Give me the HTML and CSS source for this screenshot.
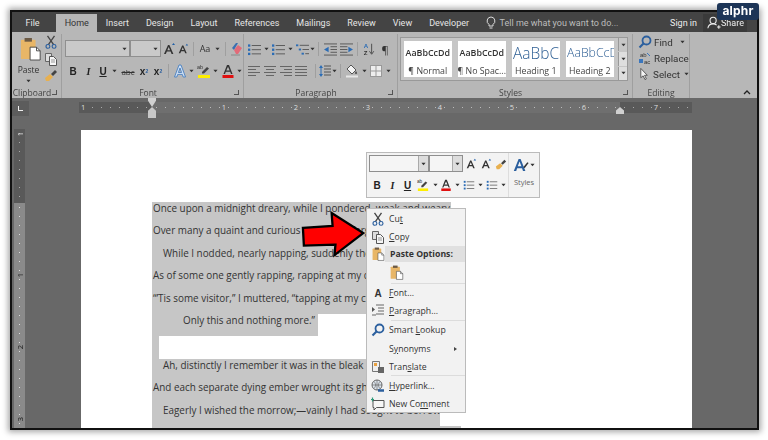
FILE: index.html
```html
<!DOCTYPE html>
<html lang="en">
<head>
<meta charset="utf-8">
<title>Word</title>
<link rel="stylesheet" href="styles.css">
</head>
<body>
<svg class="defs" aria-hidden="true">
  <symbol id="caret" viewBox="0 0 6 4"><path d="M0.5 0.5h5L3 3.5z" fill="#333"/></symbol>
  <symbol id="grow" viewBox="0 0 14 14"><path d="M2 12L6 3h1.400l4 9h-1.800l-1-2.400H4.900L3.800 12zM5.400 8.200h2.700L6.700 5z" fill="#333"/><path d="M10 3l1.500-2L13 3z" fill="#1f5fa8"/></symbol>
  <symbol id="eraser" viewBox="0 0 14 14"><path d="M3 6L7 1h2L5 8z" fill="#3a6fb0"/><path d="M5 8l4-5 4 3-4 6H7z" fill="#e26a78"/><path d="M2 13h9" stroke="#888"/></symbol>
  <symbol id="bullets" viewBox="0 0 16 14"><g fill="#2b6cb5"><rect x="1" y="1.500" width="2.500" height="2.500"/><rect x="1" y="6" width="2.500" height="2.500"/><rect x="1" y="10.500" width="2.500" height="2.500"/></g><path d="M5 2.700h10M5 7.200h10M5 11.700h10" stroke="#555"/></symbol>
  <symbol id="multi" viewBox="0 0 16 14"><g fill="#2b6cb5"><rect x="1" y="1.500" width="2.500" height="2"/><rect x="4" y="6" width="2.500" height="2"/><rect x="7" y="10.500" width="2.500" height="2"/></g><path d="M5 2.500h10M8 7h7M11 11.500h4" stroke="#555"/></symbol>
  <symbol id="indL" viewBox="0 0 16 14"><path d="M1 1h14M8 4h7M8 7h7M8 10h7M1 13h14" stroke="#555"/><path d="M6 4v6L1 7z" fill="#2b6cb5"/></symbol>
  <symbol id="indR" viewBox="0 0 16 14"><path d="M1 1h14M1 4h8M1 7h8M1 10h8M1 13h14" stroke="#555"/><path d="M10 4v6l5-3z" fill="#2b6cb5"/></symbol>
  <symbol id="sort" viewBox="0 0 14 16"><path d="M10 2v11M7.500 10.500L10 14l2.500-3.500" stroke="#444" fill="none"/><text x="1" y="7" font-size="7" font-weight="700" font-family="Liberation Sans" fill="#2b6cb5">A</text><text x="1" y="15" font-size="7" font-weight="700" font-family="Liberation Sans" fill="#333">Z</text></symbol>
  <symbol id="alignL" viewBox="0 0 14 12"><path d="M1 1.500h12M1 4.500h8M1 7.500h12M1 10.500h8" stroke="#666"/></symbol>
  <symbol id="alignC" viewBox="0 0 14 12"><path d="M1 1.500h12M3 4.500h8M1 7.500h12M3 10.500h8" stroke="#666"/></symbol>
  <symbol id="alignR" viewBox="0 0 14 12"><path d="M1 1.500h12M5 4.500h8M1 7.500h12M5 10.500h8" stroke="#666"/></symbol>
  <symbol id="alignJ" viewBox="0 0 14 12"><path d="M1 1.500h12M1 4.500h12M1 7.500h12M1 10.500h12" stroke="#666"/></symbol>
  <symbol id="spacing" viewBox="0 0 14 14"><path d="M6 2h7M6 5h7M6 8h7M6 11h7" stroke="#555"/><path d="M3 1l2 3H1zM3 13l2-3H1z" fill="#2b6cb5"/><path d="M3 4v6" stroke="#2b6cb5"/></symbol>
  <symbol id="shade" viewBox="0 0 14 14"><path d="M6 1l5 5-4 4-5-5z" fill="#f4f4f4" stroke="#555"/><path d="M11 7c1.500 2 1.500 3 0 3s-1.500-1 0-3z" fill="#555"/><rect x="1" y="11.500" width="12" height="2" fill="#e8e8e8"/></symbol>
  <symbol id="borders" viewBox="0 0 12 12"><rect x="0.500" y="0.500" width="11" height="11" fill="#eee" stroke="#999"/><path d="M6 0v12M0 6h12" stroke="#999"/></symbol>
  <symbol id="scissors" viewBox="0 0 14 16"><path d="M3 1l7 10M11 1L4 11" stroke="#444" stroke-width="1.500"/><circle cx="3.500" cy="13" r="2.200" fill="none" stroke="#2b5f9e" stroke-width="1.300"/><circle cx="10.500" cy="13" r="2.200" fill="none" stroke="#2b5f9e" stroke-width="1.300"/></symbol>
  <symbol id="copy" viewBox="0 0 14 14"><path d="M1.500 1.500h6v8h-6z" fill="#ddd" stroke="#666"/><path d="M5.500 4.500h4l3 3v6h-7z" fill="#f6f6f6" stroke="#555"/><path d="M7 8h4M7 10h4" stroke="#999"/></symbol>
  <symbol id="brush" viewBox="0 0 14 14"><path d="M1 10l5-4 3 3-4 4H2z" fill="#e8b04f"/><path d="M7 6l4-4 2 2-4 4z" fill="#444"/></symbol>
  <symbol id="paste" viewBox="0 0 24 26"><rect x="1" y="3" width="16" height="21" rx="1" fill="#e8b667"/><rect x="5" y="1" width="8" height="4" fill="#6c5a45"/><path d="M11 11h7l4 4v10H11z" fill="#fff" stroke="#444"/><path d="M18 11v4h4" fill="none" stroke="#444"/></symbol>
  <symbol id="hilite" viewBox="0 0 14 14"><text x="0" y="5" font-size="5.500" font-family="Liberation Sans" fill="#333">ab</text><path d="M5 8l5-5 2 1.500-5 5H5z" fill="#444"/><rect x="1" y="11" width="12" height="3" fill="#ffef00"/></symbol>
  <symbol id="fontcolor" viewBox="0 0 14 14"><path d="M2.500 10L6 1h2l3.500 9H10L9.200 7.800H4.800L4 10zM5.300 6.400h3.400L7 2.800z" fill="#333"/><rect x="1.500" y="11" width="11" height="3" fill="#e01010"/></symbol>
  <symbol id="effect" viewBox="0 0 14 14"><path d="M1.500 13L6 1h2l4.500 12h-2.300L9.300 10.400H4.700L3.800 13zM5.400 8.500h3.200L7 4z" fill="#cfe0f4" stroke="#3a76bd" stroke-width=".8"/></symbol>
  <symbol id="styleA" viewBox="0 0 20 18"><path d="M1 16L7 1h2.500l6 15h-3l-1.200-3.500H5.200L4 16zM6 10h4.500L8.200 4z" fill="#2b5f9e"/><path d="M13 11l5-6 1.500 1-5 6.500z" fill="#333"/></symbol>
  <symbol id="glass" viewBox="0 0 14 14"><circle cx="8.500" cy="5.500" r="4" fill="none" stroke="#2b5f9e" stroke-width="1.800"/><path d="M5.500 8.500L1.500 12.500" stroke="#2b5f9e" stroke-width="2.200"/></symbol>
  <symbol id="replace" viewBox="0 0 14 14"><text x="2" y="5.500" font-size="6" font-family="Liberation Sans" fill="#333">ab</text><text x="6" y="13" font-size="6" font-family="Liberation Sans" fill="#333">ac</text><path d="M1 8h4v4H1z" fill="#3a76bd"/><path d="M9 2l3 3" stroke="#3a76bd"/></symbol>
  <symbol id="cursor" viewBox="0 0 14 14"><path d="M3 1v10l2.500-2 2 4 1.500-.8-2-3.800H10z" fill="#f4f4f4" stroke="#555"/></symbol>
  <symbol id="para" viewBox="0 0 14 14"><path d="M5 1h8M7 4h6M7 7h6M5 10h8" stroke="#666"/><path d="M1 3l3 2.500L1 8z" fill="#555"/><path d="M1 11h4" stroke="#666"/></symbol>
  <symbol id="translate" viewBox="0 0 14 14"><path d="M1.500 1.500h7v10h-7z" fill="#eee" stroke="#777"/><rect x="3" y="3" width="3" height="3" fill="#e8a040"/><path d="M7 7h6v6H7z" fill="#666"/></symbol>
  <symbol id="globe" viewBox="0 0 14 14"><circle cx="6" cy="6" r="5" fill="#dfe7ef" stroke="#666"/><path d="M1 6h10M6 1v10M3 2.500c2 2 2 5 0 7M9 2.500c-2 2-2 5 0 7" stroke="#666" fill="none" stroke-width=".7"/><path d="M7 11.500h6" stroke="#2b5f9e" stroke-width="2.500"/></symbol>
  <symbol id="comment" viewBox="0 0 14 14"><path d="M2 3.500h11v7H5.500L3 13v-2.500H2z" fill="#f6f6f6" stroke="#555"/><path d="M1.500 0.500v4M0 2.500h3" stroke="#2f9a7a" stroke-width="1.200"/></symbol>
  <symbol id="person" viewBox="0 0 16 16"><circle cx="7" cy="5" r="3.500" fill="none" stroke="#eee" stroke-width="1.200"/><path d="M1 14c.5-4 3-5 6-5 2 0 3 .5 4 1.500M11.500 12.500h4M13.500 10.500v4" fill="none" stroke="#eee" stroke-width="1.200"/></symbol>
  <symbol id="bulb" viewBox="0 0 12 14"><path d="M6 1a4 4 0 0 0-2 7.400V10h4V8.400A4 4 0 0 0 6 1zM4.500 12h3" fill="none" stroke="#ddd"/></symbol>
</svg>

<div class="window">
  <nav class="tabs">
    <span class="tab tab-file">File</span>
    <span class="tab tab-on">Home</span>
    <span class="tab">Insert</span>
    <span class="tab">Design</span>
    <span class="tab">Layout</span>
    <span class="tab">References</span>
    <span class="tab">Mailings</span>
    <span class="tab">Review</span>
    <span class="tab">View</span>
    <span class="tab">Developer</span>
    <span class="tell"><svg class="i-bulb"><use href="#bulb"/></svg>Tell me what you want to do...</span>
    <span class="signin">Sign in</span>
    <span class="share"><svg class="i-person"><use href="#person"/></svg>Share</span>
  </nav>

  <div class="ribbon">
    <section class="group g-clip">
      <div class="gbody clip-body">
        <div class="paste-col">
          <svg class="i-paste"><use href="#paste"/></svg>
          <span class="paste-label">Paste</span>
          <svg class="cr"><use href="#caret"/></svg>
        </div>
        <div class="clip-small">
          <svg class="i14"><use href="#scissors"/></svg>
          <svg class="i14"><use href="#copy"/></svg>
          <svg class="i14"><use href="#brush"/></svg>
        </div>
      </div>
      <div class="glabel"><span class="gname">Clipboard</span><span class="launch"></span></div>
    </section>

    <section class="group g-font">
      <div class="gbody rows">
        <div class="row">
          <span class="box box-font"><span class="drop"><svg class="cr"><use href="#caret"/></svg></span></span>
          <span class="box box-size"><span class="drop"><svg class="cr"><use href="#caret"/></svg></span></span>
          <span class="b w15"><svg class="i14"><use href="#grow"/></svg></span>
          <span class="b w14 small-a"><svg class="i12"><use href="#grow"/></svg></span>
          <span class="sep"></span>
          <span class="b w16 txt">Aa</span><span class="b w9"><svg class="cr"><use href="#caret"/></svg></span>
          <span class="sep"></span>
          <span class="b w14"><svg class="i14"><use href="#eraser"/></svg></span>
        </div>
        <div class="row row-b">
          <span class="b w16 fb">B</span>
          <span class="b w15 fi">I</span>
          <span class="b w14 fu">U</span>
          <span class="b w9"><svg class="cr"><use href="#caret"/></svg></span>
          <span class="b w18 strike">abc</span>
          <span class="b w14 fs">x<sub>2</sub></span>
          <span class="b w14 fs">x<sup>2</sup></span>
          <span class="sep"></span>
          <span class="b w15"><svg class="i14"><use href="#effect"/></svg></span>
          <span class="b w9"><svg class="cr"><use href="#caret"/></svg></span>
          <span class="b w15"><svg class="i14"><use href="#hilite"/></svg></span>
          <span class="b w9"><svg class="cr"><use href="#caret"/></svg></span>
          <span class="b w15"><svg class="i14"><use href="#fontcolor"/></svg></span>
          <span class="b w9"><svg class="cr"><use href="#caret"/></svg></span>
        </div>
      </div>
      <div class="glabel"><span class="gname">Font</span><span class="launch"></span></div>
    </section>

    <section class="group g-para">
      <div class="gbody rows">
        <div class="row row-p1">
          <span class="b w16"><svg class="i16"><use href="#bullets"/></svg></span><span class="b w8"><svg class="cr"><use href="#caret"/></svg></span>
          <span class="b w16"><svg class="i16"><use href="#bullets"/></svg></span><span class="b w8"><svg class="cr"><use href="#caret"/></svg></span>
          <span class="b w16"><svg class="i16"><use href="#multi"/></svg></span><span class="b w5"><svg class="cr"><use href="#caret"/></svg></span>
          <span class="sep"></span>
          <span class="b w16"><svg class="i16"><use href="#indL"/></svg></span>
          <span class="b w16"><svg class="i16"><use href="#indR"/></svg></span>
          <span class="sep"></span>
          <span class="b w16"><svg class="i14"><use href="#sort"/></svg></span>
          <span class="b w16 pil">¶</span>
        </div>
        <div class="row row-p2">
          <span class="b w16"><svg class="i14"><use href="#alignL"/></svg></span>
          <span class="b w16"><svg class="i14"><use href="#alignC"/></svg></span>
          <span class="b w15"><svg class="i14"><use href="#alignR"/></svg></span>
          <span class="b w16"><svg class="i14"><use href="#alignJ"/></svg></span>
          <span class="sep sep-wide"></span>
          <span class="b w14"><svg class="i14"><use href="#spacing"/></svg></span><span class="b w5"><svg class="cr"><use href="#caret"/></svg></span>
          <span class="sep"></span>
          <span class="b w16"><svg class="i14"><use href="#shade"/></svg></span><span class="b w8"><svg class="cr"><use href="#caret"/></svg></span>
          <span class="b w16"><svg class="i12"><use href="#borders"/></svg></span><span class="b w8"><svg class="cr"><use href="#caret"/></svg></span>
        </div>
      </div>
      <div class="glabel"><span class="gname">Paragraph</span><span class="launch"></span></div>
    </section>

    <section class="group g-styles">
      <div class="gbody">
        <div class="gallery">
          <div class="tile"><span class="sample s-norm">AaBbCcDd</span><span class="tname">¶ Normal</span></div>
          <div class="tile"><span class="sample s-norm">AaBbCcDd</span><span class="tname">¶ No Spac...</span></div>
          <div class="tile"><span class="sample s-h1">AaBbCc</span><span class="tname">Heading 1</span></div>
          <div class="tile"><span class="sample s-h2">AaBbCcD</span><span class="tname">Heading 2</span></div>
          <div class="scroll">
            <span class="sbtn sbtn-off"><svg class="cr"><use href="#caret"/></svg></span>
            <span class="sbtn"><svg class="cr"><use href="#caret"/></svg></span>
            <span class="sbtn"><svg class="cr"><use href="#caret"/></svg></span>
          </div>
        </div>
      </div>
      <div class="glabel"><span class="gname">Styles</span><span class="launch"></span></div>
    </section>

    <section class="group g-edit">
      <div class="gbody edit-body">
        <div class="edit-row"><svg class="i14"><use href="#glass"/></svg><span>Find</span><svg class="cr cr-l"><use href="#caret"/></svg></div>
        <div class="edit-row"><svg class="i14"><use href="#replace"/></svg><span>Replace</span></div>
        <div class="edit-row"><svg class="i14"><use href="#cursor"/></svg><span>Select</span><svg class="cr"><use href="#caret"/></svg></div>
      </div>
      <div class="glabel"><span class="gname">Editing</span></div>
    </section>
    <div class="collapse"><svg class="i-chev" viewBox="0 0 8 5"><path d="M1 4l3-3 3 3" fill="none" stroke="#222" stroke-width="1.300"/></svg></div>
  </div>

  <div class="ruler-row">
    <span class="tabstop"><span class="tabmark"></span></span>
    <div class="hruler">
      <span class="marker-top"></span>
      <span class="marker-bottom"></span>
      <span class="marker-right"></span>
      <div class="rm rm-left"><span class="num">1</span></div>
      <div class="rb">
        <span class="rc rc-half"></span>
        <span class="rc">1</span><span class="rc">2</span><span class="rc">3</span><span class="rc">4</span><span class="rc">5</span><span class="rc">6</span>
      </div>
      <div class="rm rm-right"><span class="num">7</span></div>
    </div>
  </div>

  <div class="docarea">
    <div class="vcol">
      <div class="vruler">
        <div class="vm"><span class="vn">1</span></div>
        <div class="vb">
          <span class="vc">1</span><span class="vc">2</span><span class="vc">3</span>
        </div>
      </div>
    </div>
    <main class="page">
      <div class="poem">
        <p class="ln w-a">Once upon a midnight dreary, while I pondered, weak and weary,</p>
        <p class="ln w-b">Over many a quaint and curious volume of forgotten lore—</p>
        <p class="ln w-c in1">While I nodded, nearly napping, suddenly there came a tapping,</p>
        <p class="ln w-b">As of some one gently rapping, rapping at my chamber door.</p>
        <p class="ln w-b">“’Tis some visitor,” I muttered, “tapping at my chamber door—</p>
        <p class="ln w-d in2">Only this and nothing more.”</p>
        <p class="ln w-e"></p>
        <p class="ln w-b in1">Ah, distinctly I remember it was in the bleak December;</p>
        <p class="ln w-b">And each separate dying ember wrought its ghost upon the floor.</p>
        <p class="ln w-c in1">Eagerly I wished the morrow;—vainly I had sought to borrow</p>
        <p class="ln w-f"></p>
      </div>

      <div class="mini">
        <div class="mini-left">
          <div class="row mini-r1">
            <span class="box mbox-font"><span class="drop"><svg class="cr"><use href="#caret"/></svg></span></span>
            <span class="box mbox-size"><span class="drop"><svg class="cr"><use href="#caret"/></svg></span></span>
            <span class="b w15"><svg class="i12"><use href="#grow"/></svg></span>
            <span class="b w15"><svg class="i12"><use href="#grow"/></svg></span>
            <span class="b w15"><svg class="i12"><use href="#brush"/></svg></span>
          </div>
          <div class="row mini-r2">
            <span class="b w16 fb">B</span>
            <span class="b w15 fi">I</span>
            <span class="b w15 fu">U</span>
            <span class="b w16"><svg class="i12"><use href="#hilite"/></svg></span>
            <span class="b w8"><svg class="cr"><use href="#caret"/></svg></span>
            <span class="b w14"><svg class="i12"><use href="#fontcolor"/></svg></span>
            <span class="b w8"><svg class="cr"><use href="#caret"/></svg></span>
            <span class="b w15"><svg class="i12"><use href="#bullets"/></svg></span>
            <span class="b w8"><svg class="cr"><use href="#caret"/></svg></span>
            <span class="b w15"><svg class="i12"><use href="#bullets"/></svg></span>
            <span class="b w8"><svg class="cr"><use href="#caret"/></svg></span>
          </div>
        </div>
        <div class="mini-styles">
          <span class="mini-a"><svg class="i-stylea"><use href="#styleA"/></svg><svg class="cr"><use href="#caret"/></svg></span>
          <span class="mini-st">Styles</span>
        </div>
      </div>

      <svg class="arrow" viewBox="0 0 70 50"><path d="M2 17.500L33 15.500 32 2 65 23 35 46 36 35 3 36z" fill="#f00" stroke="#000" stroke-width="2.400" stroke-linejoin="miter"/></svg>

      <div class="menu">
        <div class="mi m-cut"><span class="mic"><svg class="i14"><use href="#scissors"/></svg></span><span>Cu<u>t</u></span></div>
        <div class="mi m-copy"><span class="mic"><svg class="i14"><use href="#copy"/></svg></span><span><u>C</u>opy</span></div>
        <div class="mi m-head"><span class="mic"><svg class="i-pst"><use href="#paste"/></svg></span><span class="head-t">Paste Options:</span></div>
        <div class="mi m-pst"><span class="mic"></span><svg class="i-pst2"><use href="#paste"/></svg></div>
        <div class="msep"></div>
        <div class="mi"><span class="mic mic-a">A</span><span><u>F</u>ont...</span></div>
        <div class="mi"><span class="mic"><svg class="i14"><use href="#para"/></svg></span><span><u>P</u>aragraph...</span></div>
        <div class="msep"></div>
        <div class="mi"><span class="mic"><svg class="i14"><use href="#glass"/></svg></span><span>Smart <u>L</u>ookup</span></div>
        <div class="mi m-syn"><span class="mic"></span><span>S<u>y</u>nonyms</span><span class="tri"></span></div>
        <div class="mi m-tr"><span class="mic"><svg class="i14"><use href="#translate"/></svg></span><span>Tran<u>s</u>late</span></div>
        <div class="msep"></div>
        <div class="mi"><span class="mic"><svg class="i14"><use href="#globe"/></svg></span><span><u>H</u>yperlink...</span></div>
        <div class="mi"><span class="mic"><svg class="i14"><use href="#comment"/></svg></span><span>New Co<u>m</u>ment</span></div>
      </div>
    </main>
  </div>
</div>

<div class="badge">alphr</div>
</body>
</html>
```
FILE: styles.css
```css
* { box-sizing: border-box; }
html, body { margin: 0; height: 100%; }
body {
  width: 768px; height: 440px; padding: 10px 9px 10px 10px;
  background: #fff; overflow: hidden; position: relative;
  font-family: "Open Sans", "Noto Sans", sans-serif; color: #333;
}
.defs { position: absolute; width: 0; height: 0; }

.window {
  height: 420px; border: 2px solid #111;
  box-shadow: 0 0 6px 2px rgba(0,0,0,.35);
  background: #686868; overflow: hidden;
  display: flex; flex-direction: column;
  filter: blur(.45px);
}

.tabs {
  flex: 0 0 20px; height: 20px; background: #444; color: #e6e6e6;
  display: flex; align-items: flex-end; padding-left: 5px;
  font: 9px "Roboto", sans-serif;
}
.tab { padding: 0 8.500px; height: 18px; line-height: 18px; white-space: nowrap; }
.tab-file { margin-right: 8px; }
.tab-on { background: #b7b7b7; color: #333; }
.tell { margin-left: 7px; color: #bdbdbd; height: 18px; display: flex; align-items: center; }
.i-bulb { width: 12px; height: 14px; margin-right: 3px; }
.signin { margin-left: auto; height: 18px; line-height: 18px; color: #eee; }
.share {
  margin: 0 10px 0 6px; width: 44px; height: 18px; background: #3a3a3a; color: #eee;
  display: flex; align-items: center; padding-left: 4px;
}
.i-person { width: 14px; height: 14px; flex: none; }

.ribbon { flex: 0 0 66px; background: #b7b7b7; display: flex; position: relative; }
.group { display: flex; flex-direction: column; border-right: 1px solid #9f9f9f; margin: 2px 0 0; }
.gbody { flex: 1; min-height: 0; }
.glabel { height: 14px; display: flex; align-items: center; font-size: 8.500px; color: #444; padding-top: 2px; }
.gname { flex: 1; text-align: center; }
.launch { width: 5px; height: 5px; margin-right: 4px; border-right: 1px solid #555; border-bottom: 1px solid #555; }
.g-clip { width: 50px; }
.g-font { width: 182px; }
.g-para { width: 154px; }
.g-styles { width: 235px; }
.g-edit { width: 57px; }

.cr { width: 5px; height: 4px; display: block; flex: none; }
.i12 { width: 12px; height: 12px; display: block; }
.i14 { width: 14px; height: 14px; display: block; }
.i16 { width: 15px; height: 13px; display: block; }

.clip-body { display: flex; }
.paste-col { width: 33px; display: flex; flex-direction: column; align-items: center; font-size: 8.500px; }
.i-paste { width: 22px; height: 24px; margin: 3px 0 0 4px; flex: none; }
.paste-label { margin-top: 3px; line-height: 11px; }
.paste-col .cr { margin-top: 4px; }
.clip-small { display: flex; flex-direction: column; gap: 2.500px; padding-top: 1px; margin-left: -1px; }

.rows { display: flex; flex-direction: column; padding: 6px 0 0 3px; }
.row { display: flex; align-items: center; height: 17px; }
.row-b { margin-top: 6px; height: 16px; }
.row-p1 { margin-top: 1px; height: 16px; margin-left: -1px; }
.row-p2 { margin-top: 6px; height: 16px; margin-left: -1px; }
.b { display: flex; align-items: center; justify-content: center; flex: none; height: 16px; }
.w5 { width: 5px; } .w8 { width: 8px; } .w9 { width: 9px; }
.w14 { width: 14px; } .w15 { width: 15px; } .w16 { width: 16px; } .w18 { width: 18px; }
.sep { width: 1px; height: 14px; background: #9f9f9f; margin: 0 3px; flex: none; }
.sep-wide { margin: 0 2px 0 6px; }
.txt { font-size: 9px; }
.fb { font: 700 10px "Liberation Sans", sans-serif; color: #222; }
.fi { font: italic 700 10px "Liberation Serif", serif; color: #222; }
.fu { font: 700 10px "Liberation Sans", sans-serif; text-decoration: underline; color: #222; }
.strike { font-size: 8px; text-decoration: line-through; }
.fs { font: 700 10px "Liberation Sans", sans-serif; color: #222; }
.fs sub, .fs sup { font-size: 5px; color: #2b5f9e; line-height: 0; }
.pil { font-size: 11px; }

.box { background: #c9c9c9; border: 1px solid #8f8f8f; height: 17px; display: flex; justify-content: flex-end; flex: none; }
.box-font { width: 65px; }
.box-size { width: 31px; }
.drop { width: 10px; display: flex; align-items: center; justify-content: center; }

.g-styles .gbody { padding: 3px 0 0 2px; }
.gallery {
  width: 228px; height: 44px; background: #c6c6c6; border: 1px solid #999;
  display: flex; padding: 3px 0 0 3px; gap: 6.500px; position: relative;
}
.tile { width: 47.500px; height: 36px; background: #fff; display: flex; flex-direction: column; align-items: center; overflow: hidden; white-space: nowrap; }
.sample { height: 24px; line-height: 24px; color: #333; }
.s-norm { font-size: 8.900px; font-weight: 600; }
.s-h1 { font-size: 15.500px; font-weight: 300; color: #2e5f94; align-self: flex-start; padding-left: 1px; }
.s-h2 { font-size: 12.300px; font-weight: 300; color: #2e5f94; align-self: flex-start; padding-left: 1px; }
.tname { font-size: 8.800px; line-height: 12px; color: #444; }
.scroll { position: absolute; right: 0; top: 0; width: 9px; height: 42px; display: flex; flex-direction: column; gap: 1px; }
.sbtn { flex: 1; background: #dedede; display: flex; align-items: center; justify-content: center; border-left: 1px solid #999; }
.sbtn-off { background: #c6c6c6; }

.edit-body { display: flex; flex-direction: column; padding: 0 0 0 5px; font: 9.800px "Roboto", sans-serif; }
.edit-row { height: 16px; display: flex; align-items: center; gap: 2px; white-space: nowrap; }
.edit-row .cr { margin-left: 2px; }
.edit-row .cr-l { margin-left: 5px; }
.collapse { flex: 1; position: relative; }
.i-chev { position: absolute; right: 6px; bottom: 3px; width: 8px; height: 5px; }

.ruler-row { flex: 0 0 31px; display: flex; align-items: flex-start; background: #686868; }
.tabstop { width: 17px; height: 15px; margin-top: 3px; background: #5c5c5c; position: relative; flex: none; }
.tabmark { position: absolute; left: 6px; top: 5px; width: 5px; height: 5px; border-left: 1.500px solid #eee; border-bottom: 1.500px solid #eee; }
.hruler {
  margin: 4px 0 0 50px; height: 11px; display: flex; position: relative;
  font-size: 7.500px; line-height: 11px; color: #ddd; flex: none;
}
.rm { background: #595959 radial-gradient(circle, #aaa .5px, transparent .8px) 0 0 / 9px 11px; }
.rm-left { width: 73px; padding-left: 1px; }
.rm-right { width: 72px; text-align: center; }
.rb { width: 468px; display: flex; background: #6f6f6f; }
.rc { width: 72px; text-align: center; background: radial-gradient(circle, #bbb .5px, transparent .8px) 0 0 / 9px 11px; }
.rc-half { width: 36px; }
.num { background: #595959; padding: 0 1px; }
.marker-top { position: absolute; left: 69px; top: -4px; width: 8px; height: 9px; background: #d0d0d0; clip-path: polygon(0 0,100% 0,100% 30%,50% 100%,0 30%); }
.marker-bottom { position: absolute; left: 69px; top: 5px; width: 8px; height: 11px; background: #c8c8c8; clip-path: polygon(50% 0,100% 35%,100% 100%,0 100%,0 35%); }
.marker-right { position: absolute; left: 537px; top: 5px; width: 8px; height: 7px; background: #d0d0d0; clip-path: polygon(50% 0,100% 50%,100% 100%,0 100%,0 50%); }

.docarea { flex: 1; min-height: 0; display: flex; }
.vcol { width: 69px; flex: none; padding-left: 2px; }
.vruler { width: 11px; height: 100%; font-size: 7.500px; color: #ddd; }
.vm { height: 74px; background: #595959 radial-gradient(circle, #aaa .5px, transparent .8px) 0 0 / 11px 9px; text-align: center; line-height: 10px; }
.vb { height: 230px; padding-top: 36px; background: #8a8a8a radial-gradient(circle, #ddd .5px, transparent .8px) 0 0 / 11px 9px; }
.vc { display: block; height: 72px; line-height: 72px; text-align: center; transform: rotate(-90deg); color: #333; font-weight: 600; }
.vn { display: block; transform: rotate(-90deg); }

.page { width: 611px; flex: none; margin-top: 1px; background: #fff; position: relative; padding: 72px 0 0 71px; }
.poem { font: 9.900px "Open Sans", sans-serif; color: #333; }
.ln { margin: 0; height: 22.400px; line-height: 13px; background: #c6c6c6; white-space: nowrap; overflow: hidden; padding-left: 1px; }
.w-a { width: 299px; }
.w-b { width: 260px; }
.w-c { width: 288px; }
.w-d { width: 166px; }
.w-e { width: 7px; }
.w-f { width: 309px; }
.in1 { padding-left: 11px; }
.in2 { padding-left: 31px; }

.mini {
  position: absolute; left: 285px; top: 22px; width: 174px; height: 46px;
  background: #f3f3f3; border: 1px solid #bbb; display: flex;
}
.mini-left { width: 142px; padding: 2px 0 0 2px; border-right: 1px solid #ddd; }
.mini-r1 { height: 17px; }
.mini-r2 { margin-top: 5px; height: 16px; }
.mbox-font { width: 60px; background: #f5f5f5; }
.mbox-size { width: 34px; background: #f5f5f5; }
.mbox-font .drop, .mbox-size .drop { background: #ddd; border-left: 1px solid #aaa; }
.mini-styles { flex: 1; display: flex; flex-direction: column; align-items: center; font-size: 7.500px; color: #666; }
.mini-a { display: flex; align-items: center; gap: 1px; margin-top: 3px; height: 18px; }
.i-stylea { width: 16px; height: 15px; }
.mini-st { margin-top: 3px; }

.arrow { position: absolute; left: 220px; top: 81px; width: 67px; height: 48px; }

.menu {
  position: absolute; left: 285px; top: 78px; width: 100px; height: 205px;
  background: #f2f2f2; border: 1px solid #bbb; padding-top: 1px;
  font-size: 8.700px; color: #333;
}
.mi { height: 18px; display: flex; align-items: center; }
.mic { width: 22px; flex: none; display: flex; justify-content: center; }
.mic-a { font: 700 10px "Liberation Sans", sans-serif; }
.m-head { height: 16px; }
.head-t { background: #e0e0e0; flex: 1; height: 16px; line-height: 16px; font-weight: 700; padding-left: 5px; margin-left: -4px; }
.i-pst { width: 13px; height: 14px; }
.m-pst { height: 21px; }
.i-pst2 { width: 14px; height: 15px; margin-left: 1px; }
.msep { height: 1px; background: #dcdcdc; margin-left: 24px; }
.m-syn { height: 19px; }
.m-tr { height: 17px; }
.m-tr + .msep { margin-bottom: 1px; }
.tri { margin-left: auto; margin-right: 8px; border-left: 3px solid #444; border-top: 2.500px solid transparent; border-bottom: 2.500px solid transparent; }

.badge {
  position: absolute; left: 717px; top: 3px; width: 42px; height: 17px;
  background: #1d3557; color: #fff; border-radius: 3px; text-align: center;
  font: 700 12px/16px "Inter", sans-serif; letter-spacing: .2px;
}
```
